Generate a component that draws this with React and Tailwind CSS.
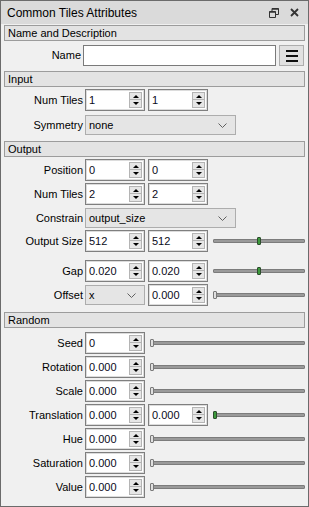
const FONT = { fontFamily: '"Liberation Sans", Arial, sans-serif' };

function SectionHeader({ title, className = "" }) {
  return (
    <div className={`mx-[3px] flex h-[16px] items-center border border-[#9c9c9c] bg-[#e3e3e3] pl-[3px] text-[11px] text-black ${className}`}>
      {title}
    </div>
  );
}

function Label({ text }) {
  return <div className="w-[84px] shrink-0 pr-[2px] text-right text-[11px] text-black">{text}</div>;
}

function SpinBox({ value }) {
  return (
    <div className="flex h-[22px] w-[60px] shrink-0 items-center border border-[#7f7f7f] bg-white shadow-[inset_0_0_0_1px_#dcdcdc]">
      <span className="flex-1 pl-[3px] text-[11px] text-[#0a0a20]">{value}</span>
      <div className="mr-[2px] flex h-[16px] w-[13px] flex-col">
        <div className="flex h-[8px] items-center justify-center border border-[#b4b4b4] bg-[#e6e6e6]">
          <div className="h-0 w-0 border-x-[3px] border-b-[3px] border-x-transparent border-b-black" />
        </div>
        <div className="flex h-[8px] items-center justify-center border border-t-0 border-[#b4b4b4] bg-[#e6e6e6]">
          <div className="h-0 w-0 border-x-[3px] border-t-[3px] border-x-transparent border-t-black" />
        </div>
      </div>
    </div>
  );
}

function Dropdown({ value, width }) {
  return (
    <div
      className="flex h-[20px] shrink-0 items-center justify-between border border-[#adadad] bg-[#e5e5e5] pl-[3px] pr-[8px] text-[11px] text-black"
      style={{ width }}
    >
      <span>{value}</span>
      <svg width="9" height="5" viewBox="0 0 9 5">
        <path d="M0.5 0.5 L4.5 4.5 L8.5 0.5" fill="none" stroke="#606060" strokeWidth="1" />
      </svg>
    </div>
  );
}

function Slider({ pos = 0, active = false }) {
  return (
    <div className="relative ml-[2px] mr-[3px] flex h-[22px] flex-1 items-center">
      <div className="h-[4px] w-full rounded-[1px] border border-[#7c7c7c] bg-[#9a9a9a]" />
      <div
        className={`absolute top-[7px] h-[8px] w-[4px] rounded-[1px] border ${active ? "border-[#2c4d2c] bg-[#3b9a3b]" : "border-[#7a7a7a] bg-[#e0e0e0]"}`}
        style={{ left: `${pos * 100}%`, marginLeft: active && pos > 0 ? -2 : 0 }}
      />
    </div>
  );
}

function Row({ label, children, className = "" }) {
  return (
    <div className={`flex items-center ${className}`}>
      <Label text={label} />
      <div className="flex flex-1 items-center gap-[3px]">{children}</div>
    </div>
  );
}

export default function App() {
  return (
    <div className="h-[507px] w-[309px] border border-[#6b6b6b] bg-[#f0f0f0]" style={FONT}>
      <div className="flex h-[23px] items-center justify-between bg-[#dadada] pl-[6px] pr-[9px]">
        <span className="text-[12px] text-black">Common Tiles Attributes</span>
        <div className="flex items-center gap-[11px]">
          <svg width="10" height="10" viewBox="0 0 10 10">
            <path d="M3 0.5 H9.5 V6.5 H7 M0.5 3.5 H6.5 V9.5 H0.5 Z M3 0.5 V3.5" fill="none" stroke="#333" strokeWidth="1" />
            <path d="M3 1 H9.5 M0.5 4 H6.5" stroke="#333" strokeWidth="1.5" />
          </svg>
          <svg width="9" height="9" viewBox="0 0 9 9">
            <path d="M1 1 L8 8 M8 1 L1 8" stroke="#333" strokeWidth="1.8" />
          </svg>
        </div>
      </div>

      <SectionHeader title="Name and Description" className="mt-[1px]" />
      <div className="mt-[4px] flex h-[21px] items-center">
        <div className="w-[81px] pr-[1px] text-right text-[11px] text-black">Name</div>
        <div className="ml-[1px] h-[21px] w-[193px] border border-[#7a7a7a] bg-white" />
        <div className="ml-[3px] flex h-[21px] w-[25px] flex-col items-center justify-center gap-[3px] border border-[#adadad] bg-[#e1e1e1]">
          <div className="h-[2px] w-[12px] bg-[#111]" />
          <div className="h-[2px] w-[12px] bg-[#111]" />
          <div className="h-[2px] w-[12px] bg-[#111]" />
        </div>
      </div>

      <SectionHeader title="Input" className="mt-[5px]" />
      <Row label="Num Tiles" className="mt-[2px]">
        <SpinBox value="1" />
        <SpinBox value="1" />
      </Row>
      <Row label="Symmetry" className="mt-[4px]">
        <Dropdown value="none" width={151} />
      </Row>

      <SectionHeader title="Output" className="mt-[6px]" />
      <Row label="Position" className="mt-[2px]">
        <SpinBox value="0" />
        <SpinBox value="0" />
      </Row>
      <Row label="Num Tiles" className="mt-[2px]">
        <SpinBox value="2" />
        <SpinBox value="2" />
      </Row>
      <Row label="Constrain" className="mt-[3px]">
        <Dropdown value="output_size" width={151} />
      </Row>
      <Row label="Output Size" className="mt-[2px]">
        <SpinBox value="512" />
        <SpinBox value="512" />
        <Slider pos={0.5} active />
      </Row>
      <Row label="Gap" className="mt-[8px]">
        <SpinBox value="0.020" />
        <SpinBox value="0.020" />
        <Slider pos={0.5} active />
      </Row>
      <Row label="Offset" className="mt-[2px]">
        <Dropdown value="x" width={60} />
        <SpinBox value="0.000" />
        <Slider />
      </Row>

      <SectionHeader title="Random" className="mt-[6px]" />
      <Row label="Seed" className="mt-[4px]">
        <SpinBox value="0" />
        <Slider />
      </Row>
      <Row label="Rotation" className="mt-[2px]">
        <SpinBox value="0.000" />
        <Slider />
      </Row>
      <Row label="Scale" className="mt-[2px]">
        <SpinBox value="0.000" />
        <Slider />
      </Row>
      <Row label="Translation" className="mt-[2px]">
        <SpinBox value="0.000" />
        <SpinBox value="0.000" />
        <Slider active />
      </Row>
      <Row label="Hue" className="mt-[2px]">
        <SpinBox value="0.000" />
        <Slider />
      </Row>
      <Row label="Saturation" className="mt-[2px]">
        <SpinBox value="0.000" />
        <Slider />
      </Row>
      <Row label="Value" className="mt-[2px]">
        <SpinBox value="0.000" />
        <Slider />
      </Row>
    </div>
  );
}
